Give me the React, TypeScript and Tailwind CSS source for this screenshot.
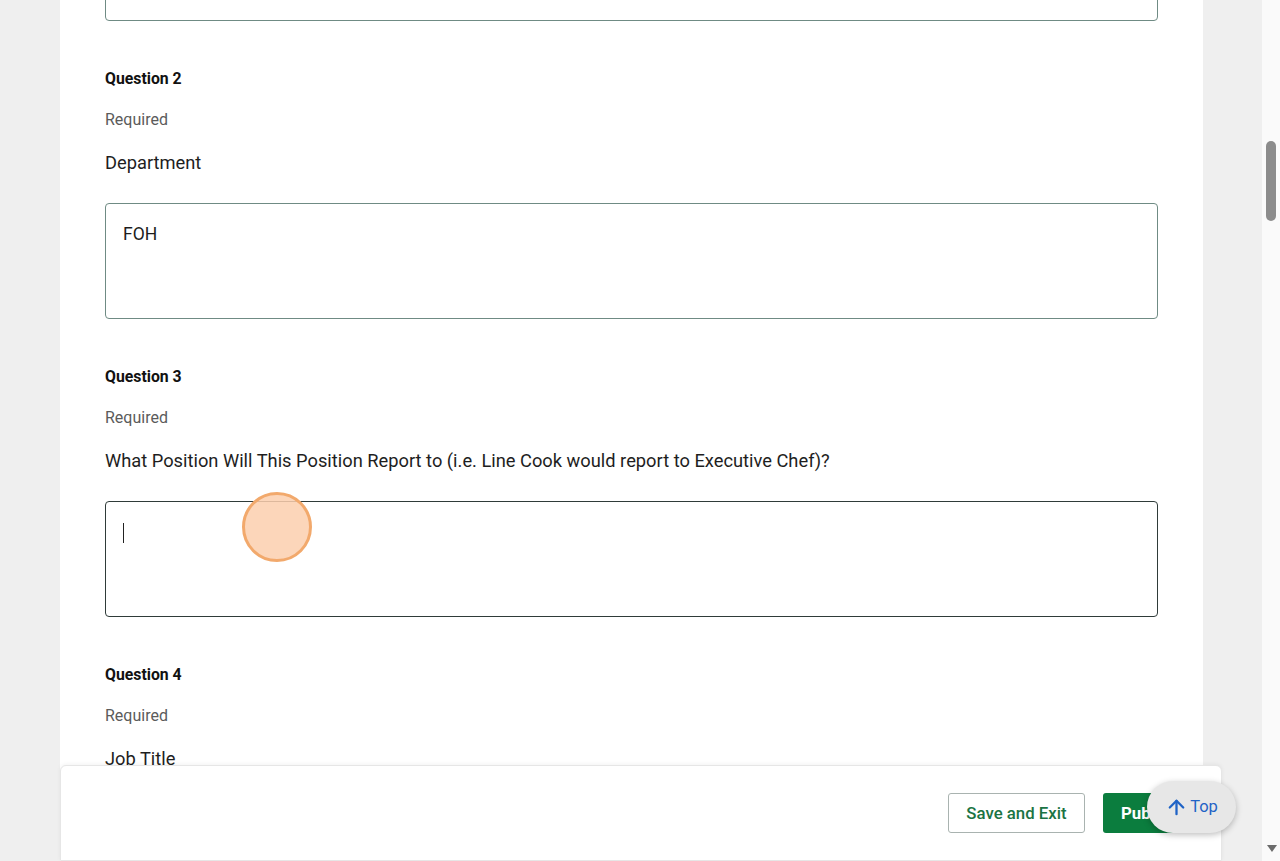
import { ArrowUp } from 'lucide-react';

type Question = {
  n: number;
  label: string;
  value?: string;
  focused?: boolean;
};

const questions: Question[] = [
  { n: 2, label: 'Department', value: 'FOH' },
  { n: 3, label: 'What Position Will This Position Report to (i.e. Line Cook would report to Executive Chef)?', focused: true },
  { n: 4, label: 'Job Title' },
];

function AnswerBox({ value, focused }: { value?: string; focused?: boolean }) {
  return (
    <div
      className={
        'relative h-[116px] w-full rounded-[4px] border bg-white px-[17px] pt-[18px] text-[17.5px] leading-6 text-[#1c1c1c] ' +
        (focused ? 'border-[#2f3b39]' : 'border-[#6f8b84]')
      }
    >
      {value}
      {focused && <span className="mt-[3px] block h-[20px] w-px bg-[#222]" />}
    </div>
  );
}

export default function App() {
  return (
    <div className="relative flex h-[861px] w-[1280px] overflow-hidden bg-[#efefef] font-['Roboto','Liberation_Sans',sans-serif]">
      <div className="w-[60px] shrink-0" />
      <div className="w-[1143px] shrink-0 bg-white px-[45px]">
        <div className="-mt-[95px]">
          <AnswerBox />
        </div>
        {questions.map((q) => (
          <div key={q.n} className="pt-[48px]">
            <div className="text-[15.8px] font-bold leading-5 text-[#111]">Question {q.n}</div>
            <div className="mt-[19px] text-[16px] leading-6 text-[#5b5b5b]">Required</div>
            <div className="mt-[19px] text-[18.3px] leading-6 text-[#1e1e1e]">{q.label}</div>
            <div className="mt-[28px]">
              <AnswerBox value={q.value} focused={q.focused} />
            </div>
          </div>
        ))}
      </div>
      <div className="w-[59px] shrink-0" />
      <div className="relative w-[18px] shrink-0 bg-[#fafafa]">
        <div className="absolute left-[4px] top-[141px] h-[80px] w-[10px] rounded-full bg-[#8c8c8c]" />
        <div className="absolute left-[5px] top-[845px] h-0 w-0 border-l-[5px] border-r-[5px] border-t-[7px] border-l-transparent border-r-transparent border-t-[#6b6b6b]" />
      </div>

      {/* click marker */}
      <div className="pointer-events-none absolute left-[242px] top-[492px] h-[70px] w-[70px] rounded-full border-[3px] border-[#f2a96c] bg-[#fbcfae]/85" />

      {/* footer bar */}
      <div className="absolute left-[60px] top-[765px] flex h-[96px] w-[1162px] items-start justify-end gap-[18px] rounded-t-[6px] border border-[#e6e6e6] bg-white pr-[18px] pt-[27px] shadow-[0_-1px_4px_rgba(0,0,0,0.05)]">
        <button className="h-[40px] w-[137px] rounded-[3px] border border-[#a9b3b0] bg-white pt-[1px] text-[16.8px] font-medium text-[#1b7444]">
          Save and Exit
        </button>
        <button className="h-[40px] w-[100px] rounded-[3px] bg-[#0b7d3e] pl-[18px] pt-[1px] text-left text-[16.8px] font-bold text-white">
          Publish
        </button>
      </div>

      <div className="absolute left-[1147px] top-[781px] flex h-[52px] w-[89px] items-center justify-center gap-[2px] rounded-full bg-[#e7e7e7] pt-[1px] text-[16.5px] text-[#1f63c6] shadow-[0_2px_6px_rgba(0,0,0,0.25)]">
        <ArrowUp size={23} strokeWidth={2.4} />
        <span>Top</span>
      </div>
    </div>
  );
}
